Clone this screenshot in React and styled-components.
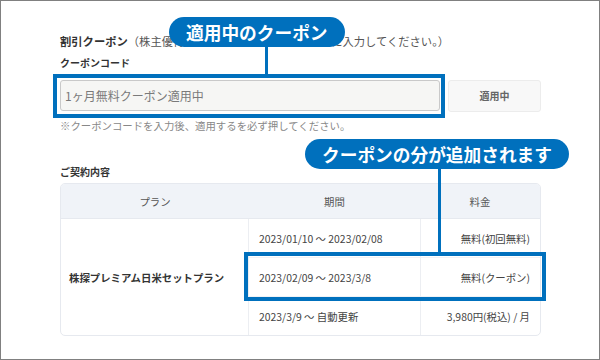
import React from "react";
import styled, { createGlobalStyle } from "styled-components";

const BLUE = "#0070bd";

const GlobalStyle = createGlobalStyle`
    html, body {
        margin: 0;
        padding: 0;
        background: #ffffff;
    }
    body {
        font-family: "Noto Sans CJK JP", "Noto Sans", sans-serif;
    }
`;

const plans = [
    { period: "2023/01/10 ～ 2023/02/08", price: "無料(初回無料)" },
    { period: "2023/02/09 ～ 2023/3/8", price: "無料(クーポン)" },
    { period: "2023/3/9 ～ 自動更新", price: "3,980円(税込) / 月" },
];

const App = () => {
    return (
        <>
            <GlobalStyle />
            <SFrame>
                <STitle>
                    <b>割引クーポン</b>
                    （株主優待コードをお持ちの方はこちらに入力してください。）
                </STitle>
                <SLabel>クーポンコード</SLabel>
                <SInputRow>
                    <SInput
                        type="text"
                        placeholder="1ヶ月無料クーポン適用中"
                        readOnly
                    />
                    <SApplyButton type="button">適用中</SApplyButton>
                </SInputRow>
                <SNote>
                    ※クーポンコードを入力後、適用するを必ず押してください。
                </SNote>

                <SSectionTitle>ご契約内容</SSectionTitle>
                <STableWrap>
                    <STable>
                        <colgroup>
                            <col style={{ width: 188 }} />
                            <col style={{ width: 171 }} />
                            <col />
                        </colgroup>
                        <thead>
                            <tr>
                                <STh>プラン</STh>
                                <STh>期間</STh>
                                <STh>料金</STh>
                            </tr>
                        </thead>
                        <tbody>
                            {plans.map((p, i) => (
                                <tr key={p.period}>
                                    {i === 0 && (
                                        <SPlanCell rowSpan={plans.length}>
                                            株探プレミアム日米セットプラン
                                        </SPlanCell>
                                    )}
                                    <STd $first={i === 0}>{p.period}</STd>
                                    <STd $first={i === 0} $right>
                                        {p.price}
                                    </STd>
                                </tr>
                            ))}
                        </tbody>
                    </STable>
                </STableWrap>

                <SHighlight $x={52} $y={73} $w={392} $h={44} />
                <SHighlight $x={243} $y={251} $w={302} $h={49} />

                <SCallout $x={168} $y={16}>
                    <SPill>適用中のクーポン</SPill>
                    <SStem $left={96} $len={27} />
                </SCallout>
                <SCallout $x={304} $y={138}>
                    <SPill>クーポンの分が追加されます</SPill>
                    <SStem $left={133} $len={85} />
                </SCallout>
            </SFrame>
        </>
    );
};

const SFrame = styled.div`
    position: relative;
    width: 600px;
    height: 360px;
    box-sizing: border-box;
    border: 1px solid #808080;
    padding: 32px 0 0 59px;
    overflow: hidden;
    color: #333;
`;

const STitle = styled.div`
    font-size: 11.3px;
    line-height: 16px;
    color: #555;
    white-space: nowrap;
    b {
        color: #333;
        font-weight: 700;
    }
`;

const SLabel = styled.div`
    margin-top: 7px;
    font-size: 10px;
    line-height: 14px;
    font-weight: 700;
    color: #333;
`;

const SInputRow = styled.div`
    display: flex;
    align-items: center;
    gap: 8px;
    margin-top: 10px;
    height: 31px;
`;

const SInput = styled.input`
    box-sizing: border-box;
    width: 380px;
    height: 31px;
    padding: 0 4px;
    border: 1px solid #c9c9c9;
    border-radius: 3px;
    background: #f6f6f4;
    font-family: inherit;
    font-size: 12px;
    outline: none;
    &::placeholder {
        color: #7a7a7a;
    }
`;

const SApplyButton = styled.button`
    box-sizing: border-box;
    width: 93px;
    height: 32px;
    border: 1px solid #ececec;
    border-radius: 3px;
    background: #f8f8f8;
    font-family: inherit;
    font-size: 10px;
    font-weight: 700;
    color: #666;
`;

const SNote = styled.div`
    margin-top: 8px;
    font-size: 10.4px;
    line-height: 14px;
    color: #888;
`;

const SSectionTitle = styled.div`
    margin-top: 32px;
    font-size: 10px;
    line-height: 14px;
    font-weight: 700;
    color: #333;
`;

const STableWrap = styled.div`
    margin-top: 4px;
    width: 481px;
    box-sizing: border-box;
    border: 1px solid #e6e9ef;
    border-radius: 5px;
    overflow: hidden;
`;

const STable = styled.table`
    width: 100%;
    border-collapse: separate;
    border-spacing: 0;
    table-layout: fixed;
    font-size: 10.4px;
`;

const STh = styled.th`
    height: 34px;
    padding: 0;
    background: #f0f3f8;
    font-weight: 400;
    color: #555;
    text-align: center;
    border-bottom: 1px solid #e6e9ef;
`;

const SPlanCell = styled.td`
    padding: 0 0 0 8px;
    font-weight: 700;
    color: #333;
    border-right: 1px solid #eceef2;
    white-space: nowrap;
`;

const STd = styled.td`
    height: 38px;
    padding: 0 10px;
    color: #444;
    text-align: ${(p) => (p.$right ? "right" : "left")};
    border-top: ${(p) => (p.$first ? "none" : "1px solid #f1f2f5")};
    border-left: ${(p) => (p.$right ? "1px solid #eceef2" : "none")};
    white-space: nowrap;
`;

const SHighlight = styled.div`
    position: absolute;
    left: ${(p) => p.$x}px;
    top: ${(p) => p.$y}px;
    width: ${(p) => p.$w}px;
    height: ${(p) => p.$h}px;
    box-sizing: border-box;
    border: 4px solid ${BLUE};
    pointer-events: none;
`;

const SCallout = styled.div`
    position: absolute;
    left: ${(p) => p.$x}px;
    top: ${(p) => p.$y}px;
`;

const SPill = styled.div`
    height: 30px;
    padding: 0 17px;
    border-radius: 15px;
    background: ${BLUE};
    color: #ffffff;
    font-size: 17.7px;
    font-weight: 700;
    line-height: 30px;
    white-space: nowrap;
`;

const SStem = styled.div`
    margin-left: ${(p) => p.$left}px;
    width: 3px;
    height: ${(p) => p.$len}px;
    background: ${BLUE};
`;

export default App;
